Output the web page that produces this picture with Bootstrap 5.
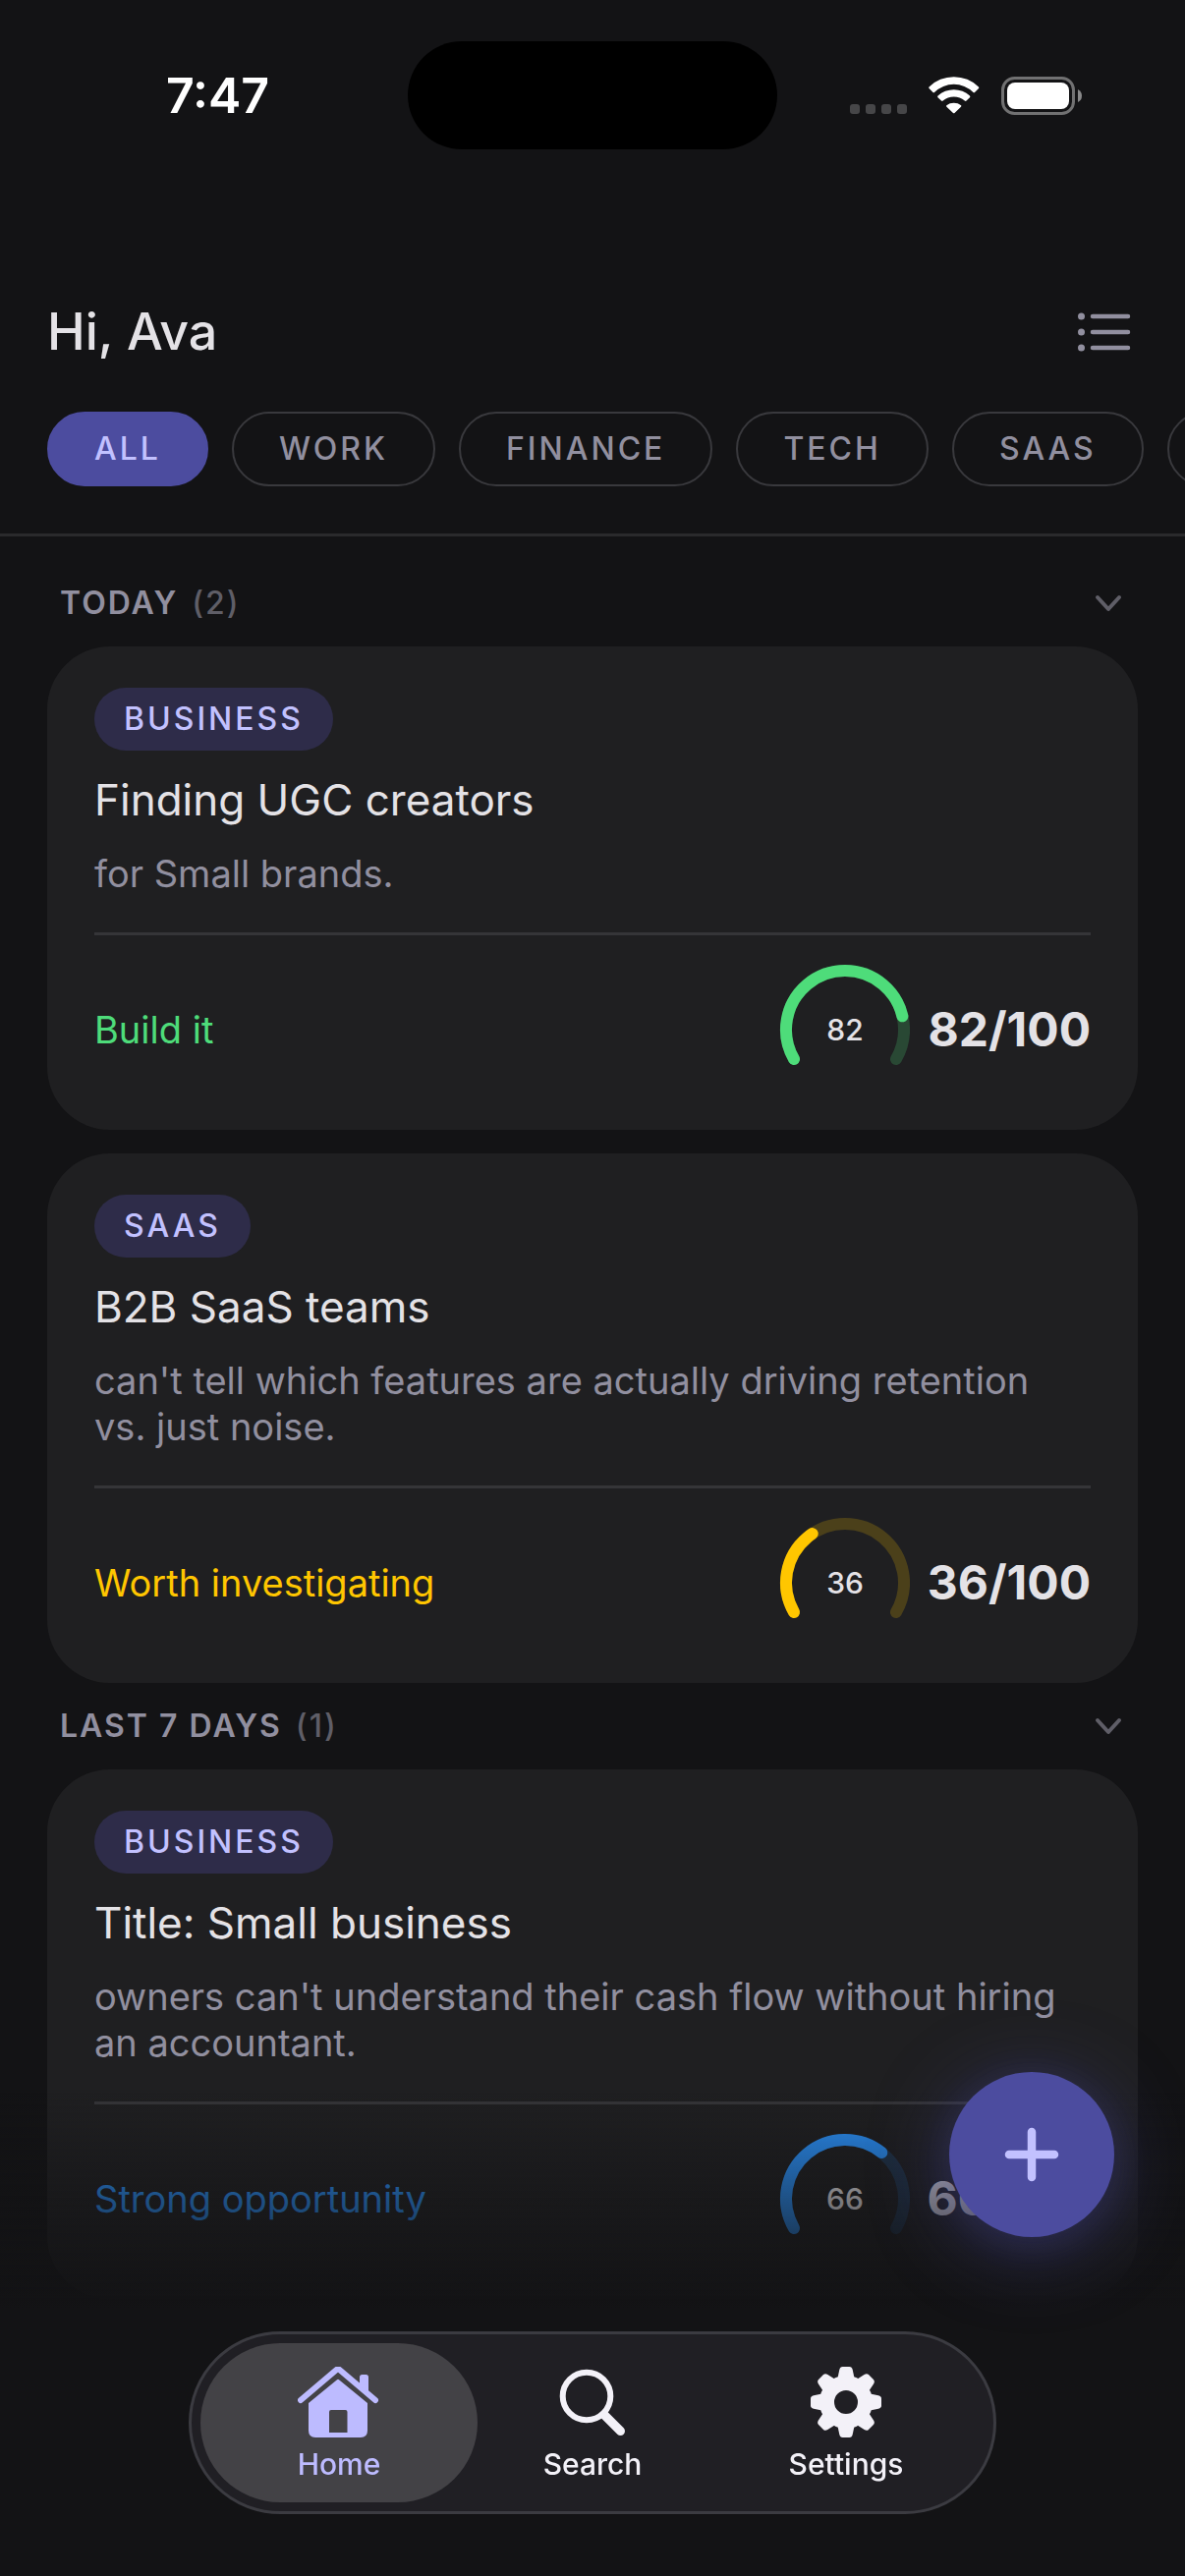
<!DOCTYPE html>
<html lang="en" data-bs-theme="dark">
<head>
<meta charset="utf-8">
<meta name="viewport" content="width=device-width, initial-scale=1">
<title>Home</title>
<link rel="stylesheet" href="https://cdn.jsdelivr.net/npm/bootstrap@5.3.0/dist/css/bootstrap.min.css">
<style>
  :root {
    --bg: #131315;
    --surface: #1f1f21;
    --line: #353538;
    --ink: #e4e2e6;
    --muted: #918f9f;
    --faint: #5f5e67;
    --accent: #4c4c9f;
    --accent-ink: #c2c1ff;
  }
  body {
    background: var(--bg);
    color: var(--ink);
    font-family: Inter, "Liberation Sans", sans-serif;
    min-height: 100vh;
  }
  svg { display: block; flex: none; }

  .status-bar { padding-top: 42px; color: #fff; }
  .status-side { flex: 1 1 0; padding: 0 30px; }
  .status-time { font-size: 50px; line-height: 60px; font-weight: 600; text-indent: 28px; }
  .status-icons { gap: 22px; padding: 0 46px 0 14px; }
  .island { width: 376px; height: 110px; background: #000; }

  .page-head { padding: 153px 48px 0; }
  .greeting { font-size: 52px; line-height: 66px; font-weight: 500; color: var(--ink); }
  .icon-btn { background: none; border: 0; padding: 0; color: var(--muted); }

  .chip-row {
    gap: 24px;
    padding: 48px;
    border-bottom: 3px solid #2a2a2c;
    overflow-x: auto;
    scrollbar-width: none;
  }
  .chip-row::-webkit-scrollbar { display: none; }
  .chip {
    flex: none;
    height: 76px;
    padding: 0 46px;
    border: 2px solid #39393d;
    border-radius: 38px;
    background: none;
    color: var(--muted);
  }
  .chip.active { background: var(--accent); border-color: var(--accent); color: var(--accent-ink); }
  .caps { font-size: 32px; line-height: 40px; font-weight: 500; letter-spacing: 3px; text-transform: uppercase; }

  .feed { padding: 24px 48px 282px; }
  .group-head {
    width: 100%;
    height: 88px;
    padding: 0 16px 0 13px;
    border: 0;
    background: none;
    color: var(--muted);
  }
  .group-head.caps { font-weight: 600; letter-spacing: 2px; }
  .group-head .count, .group-head svg { color: var(--faint); }
  .group-head .count { margin-left: 14px; font-weight: 500; }
  .stack { gap: 24px; }

  .idea { background: var(--surface); border: 0; border-radius: 64px; padding: 42px 48px 30px; color: var(--ink); }
  .tag { padding: 12px 30px; border-radius: 32px; background: #2e2c49; color: var(--accent-ink); }
  .idea-title { font-size: 44px; line-height: 56px; font-weight: 400; margin: 22px 0 24px; color: var(--ink); }
  .idea-text { font-size: 38px; line-height: 47px; color: var(--muted); margin: 0 0 36px; }
  .idea-foot { border-top: 3px solid var(--line); padding-top: 24px; }
  .verdict { font-size: 38px; line-height: 47px; }
  .score { font-size: 48px; line-height: 58px; font-weight: 700; }
  .gauge { margin-right: 18px; }
  .gauge text { font-size: 30px; font-weight: 500; fill: var(--ink); }
  .gauge path { fill: none; stroke: currentColor; stroke-width: 12; stroke-linecap: round; }
  .tone-build { color: #4edc7a; }
  .tone-maybe { color: #ffc600; }
  .tone-strong { color: #2a8df2; }

  .dock {
    padding: 243px 48px 63px;
    background: linear-gradient(rgba(19,19,21,0), var(--bg) 220px);
    pointer-events: none;
  }
  .dock > * { pointer-events: auto; }
  .tab-bar { padding: 9px; border: 3px solid #3b3b41; border-radius: 93px; background: #201f24; }
  .tab {
    width: 282px;
    height: 162px;
    padding-top: 24px;
    border-radius: 81px;
    font-size: 30px;
    line-height: 36px;
    font-weight: 500;
    gap: 9px;
    color: #f3f1f8;
    text-decoration: none;
  }
  .tab + .tab { margin-left: -24px; }
  .tab.active { background: #434246; color: #bdbbff; }

  .fab {
    position: fixed;
    right: 72px;
    bottom: 345px;
    z-index: 1040;
    width: 168px;
    height: 168px;
    border: 0;
    border-radius: 50%;
    background: var(--accent);
    color: var(--accent-ink);
    box-shadow: 0 12px 84px rgba(76,76,159,.45), 0 6px 42px rgba(76,76,159,.2);
  }
</style>
</head>
<body>

<svg width="0" height="0" class="position-absolute" aria-hidden="true">
  <defs>
    <path id="tooth" d="M27 14 L29.300 3 Q30 0 32.500 0 H39.500 Q42 0 42.700 3 L45 14Z"/>
    <path id="chev" d="M3 3 L14 15 L25 3" fill="none" stroke="currentColor" stroke-width="4" stroke-linecap="round" stroke-linejoin="round"/>
  </defs>
</svg>

<header>
  <div class="status-bar d-flex align-items-center">
    <div class="status-side status-time text-center">7:47</div>
    <div class="island rounded-pill"></div>
    <div class="status-side status-icons d-flex justify-content-center align-items-center">
      <svg width="58" height="38" viewBox="0 0 58 38" fill="#464648"><rect y="28" width="10" height="10" rx="3"/><rect x="16" y="28" width="10" height="10" rx="3"/><rect x="32" y="28" width="10" height="10" rx="3"/><rect x="48" y="28" width="10" height="10" rx="3"/></svg>
      <svg width="52" height="38" viewBox="0 0 52 38" fill="#fff">
        <path d="M.5 10.500A36 36 0 0 1 51 10.500Q51.500 11.500 51 12L47 16Q46.300 16.700 45.500 16A28 28 0 0 0 6 16Q5.200 16.700 4.500 16L.6 12Q0 11.500 .5 10.500Z"/>
        <path d="M9.500 19.500A24 24 0 0 1 42 19.500Q42.800 20.500 42 21.200L38.500 24.600Q37.700 25.300 36.800 24.600A17 17 0 0 0 14.700 24.600Q13.900 25.300 13 24.600L9.500 21.200Q8.700 20.500 9.500 19.500Z"/>
        <path d="M18.300 29.300A12.500 12.500 0 0 1 33.200 29.300Q33.600 30 33 30.700L26.500 37Q25.700 37.700 25 37L18.400 30.700Q17.800 30 18.300 29.300Z"/>
      </svg>
      <svg width="82" height="39" viewBox="0 0 82 39"><rect x="1.500" y="1.500" width="72" height="36" rx="12" fill="none" stroke="#717172" stroke-width="3"/><rect x="6" y="6" width="63" height="27" rx="8" fill="#fff"/><path d="M78 13Q82 15 82 19.500Q82 24 78 26Z" fill="#89898a"/></svg>
    </div>
  </div>

  <div class="page-head d-flex justify-content-between align-items-center">
    <h1 class="greeting m-0">Hi, Ava</h1>
    <button type="button" class="icon-btn" aria-label="View as list">
      <svg width="61" height="40" viewBox="0 0 61 40" fill="none" stroke="currentColor" stroke-linecap="round"><path d="M15 4H51M15 20H51M15 36H51" stroke-width="4.500"/><path d="M3.500 4h.01M3.500 20h.01M3.500 36h.01" stroke-width="7"/></svg>
    </button>
  </div>

  <div class="chip-row d-flex">
    <button type="button" class="chip caps active">All</button>
    <button type="button" class="chip caps">Work</button>
    <button type="button" class="chip caps">Finance</button>
    <button type="button" class="chip caps">Tech</button>
    <button type="button" class="chip caps">SaaS</button>
    <button type="button" class="chip caps">Business</button>
  </div>
</header>

<main class="feed">
  <section>
    <button type="button" class="group-head caps d-flex align-items-center" aria-expanded="true">
      <span>Today</span><span class="count">(2)</span>
      <svg class="ms-auto" width="28" height="18" viewBox="0 0 28 18"><use href="#chev"/></svg>
    </button>
    <div class="stack d-flex flex-column">
      <article class="card idea align-items-start">
        <span class="tag caps">Business</span>
        <h2 class="idea-title">Finding UGC creators</h2>
        <p class="idea-text">for Small brands.</p>
        <div class="idea-foot w-100 d-flex align-items-center">
          <span class="verdict tone-build me-auto">Build it</span>
          <svg class="gauge tone-build" width="140" height="144" viewBox="0 0 140 144"><path d="M22.040 102A60 60 0 1 1 125.960 102" opacity=".22"/><path d="M22.040 102A60 60 0 1 1 125.960 102" pathLength="100" stroke-dasharray="82 200"/><text x="74" y="83" text-anchor="middle">82</text></svg>
          <span class="score">82/100</span>
        </div>
      </article>
      <article class="card idea align-items-start">
        <span class="tag caps">SaaS</span>
        <h2 class="idea-title">B2B SaaS teams</h2>
        <p class="idea-text">can't tell which features are actually driving retention vs. just noise.</p>
        <div class="idea-foot w-100 d-flex align-items-center">
          <span class="verdict tone-maybe me-auto">Worth investigating</span>
          <svg class="gauge tone-maybe" width="140" height="144" viewBox="0 0 140 144"><path d="M22.040 102A60 60 0 1 1 125.960 102" opacity=".2"/><path d="M22.040 102A60 60 0 1 1 125.960 102" pathLength="100" stroke-dasharray="36 200"/><text x="74" y="83" text-anchor="middle">36</text></svg>
          <span class="score">36/100</span>
        </div>
      </article>
    </div>
  </section>

  <section>
    <button type="button" class="group-head caps d-flex align-items-center" aria-expanded="true">
      <span>Last 7 days</span><span class="count">(1)</span>
      <svg class="ms-auto" width="28" height="18" viewBox="0 0 28 18"><use href="#chev"/></svg>
    </button>
    <article class="card idea align-items-start">
      <span class="tag caps">Business</span>
      <h2 class="idea-title">Title: Small business</h2>
      <p class="idea-text">owners can't understand their cash flow without hiring an accountant.</p>
      <div class="idea-foot w-100 d-flex align-items-center">
        <span class="verdict tone-strong me-auto">Strong opportunity</span>
        <svg class="gauge tone-strong" width="140" height="144" viewBox="0 0 140 144"><path d="M22.040 102A60 60 0 1 1 125.960 102" opacity=".2"/><path d="M22.040 102A60 60 0 1 1 125.960 102" pathLength="100" stroke-dasharray="66 200"/><text x="74" y="83" text-anchor="middle">66</text></svg>
        <span class="score">66/100</span>
      </div>
    </article>
  </section>
</main>

<div class="dock fixed-bottom d-flex justify-content-center">
  <nav class="tab-bar d-flex" aria-label="Main">
    <a href="#" class="tab active d-flex flex-column align-items-center" aria-current="page">
      <svg width="84" height="72" viewBox="0 0 84 72" fill="currentColor">
        <path d="M3 34L39.200 3.200Q41 1.700 42.800 3.200L79 34" fill="none" stroke="currentColor" stroke-width="6" stroke-linecap="round"/>
        <path d="M63 20V10.500Q63 8 65.500 8H69.500Q72 8 72 10.500V28Z"/>
        <path fill-rule="evenodd" d="M11 37L40 13.200Q41 12.400 42 13.200L71 37V65Q71 72 64 72H18Q11 72 11 65ZM34 44Q32 44 32 46V67H50.500V46Q50.500 44 48.500 44Z"/>
      </svg>
      Home
    </a>
    <a href="#" class="tab d-flex flex-column align-items-center">
      <svg width="68" height="72" viewBox="0 0 68 72" fill="none" stroke="currentColor"><circle cx="28" cy="30" r="24.300" stroke-width="6"/><path d="M46 49L62.500 65.500" stroke-width="9" stroke-linecap="round"/></svg>
      Search
    </a>
    <a href="#" class="tab d-flex flex-column align-items-center">
      <svg width="72" height="72" viewBox="0 0 72 72" fill="currentColor">
        <circle cx="36" cy="36" r="19.500" fill="none" stroke="currentColor" stroke-width="15"/>
        <use href="#tooth"/><use href="#tooth" transform="rotate(45 36 36)"/><use href="#tooth" transform="rotate(90 36 36)"/><use href="#tooth" transform="rotate(135 36 36)"/><use href="#tooth" transform="rotate(180 36 36)"/><use href="#tooth" transform="rotate(225 36 36)"/><use href="#tooth" transform="rotate(270 36 36)"/><use href="#tooth" transform="rotate(315 36 36)"/>
      </svg>
      Settings
    </a>
  </nav>
</div>

<button type="button" class="fab d-flex justify-content-center align-items-center" aria-label="Add idea">
  <svg width="56" height="56" viewBox="0 0 56 56" fill="none" stroke="currentColor" stroke-width="8.500" stroke-linecap="round"><path d="M28 5V51M5 28H51"/></svg>
</button>

<script src="https://cdn.jsdelivr.net/npm/bootstrap@5.3.0/dist/js/bootstrap.bundle.min.js"></script>
</body>
</html>
